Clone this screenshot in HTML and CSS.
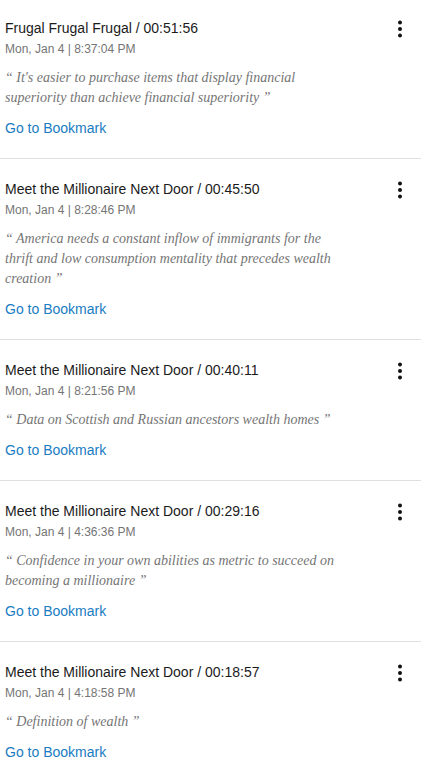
FILE: index.html
```html
<!DOCTYPE html>
<html>
<head>
<meta charset="utf-8">
<link rel="stylesheet" href="styles.css">
</head>
<body>
<ul class="list">
  <li class="item">
    <div class="head">
      <div class="meta">
        <div class="title">Frugal Frugal Frugal / 00:51:56</div>
        <div class="date">Mon, Jan 4 | 8:37:04 PM</div>
      </div>
      <button class="menu" aria-label="More"><svg viewBox="0 0 24 24" width="24" height="24"><circle cx="12" cy="5.5" r="2"/><circle cx="12" cy="12" r="2"/><circle cx="12" cy="18.5" r="2"/></svg></button>
    </div>
    <p class="quote">“ It's easier to purchase items that display financial superiority than achieve financial superiority ”</p>
    <a class="link" href="#">Go to Bookmark</a>
  </li>
  <li class="item">
    <div class="head">
      <div class="meta">
        <div class="title">Meet the Millionaire Next Door / 00:45:50</div>
        <div class="date">Mon, Jan 4 | 8:28:46 PM</div>
      </div>
      <button class="menu" aria-label="More"><svg viewBox="0 0 24 24" width="24" height="24"><circle cx="12" cy="5.5" r="2"/><circle cx="12" cy="12" r="2"/><circle cx="12" cy="18.5" r="2"/></svg></button>
    </div>
    <p class="quote">“ America needs a constant inflow of immigrants for the thrift and low consumption mentality that precedes wealth creation ”</p>
    <a class="link" href="#">Go to Bookmark</a>
  </li>
  <li class="item">
    <div class="head">
      <div class="meta">
        <div class="title">Meet the Millionaire Next Door / 00:40:11</div>
        <div class="date">Mon, Jan 4 | 8:21:56 PM</div>
      </div>
      <button class="menu" aria-label="More"><svg viewBox="0 0 24 24" width="24" height="24"><circle cx="12" cy="5.5" r="2"/><circle cx="12" cy="12" r="2"/><circle cx="12" cy="18.5" r="2"/></svg></button>
    </div>
    <p class="quote">“ Data on Scottish and Russian ancestors wealth homes ”</p>
    <a class="link" href="#">Go to Bookmark</a>
  </li>
  <li class="item">
    <div class="head">
      <div class="meta">
        <div class="title">Meet the Millionaire Next Door / 00:29:16</div>
        <div class="date">Mon, Jan 4 | 4:36:36 PM</div>
      </div>
      <button class="menu" aria-label="More"><svg viewBox="0 0 24 24" width="24" height="24"><circle cx="12" cy="5.5" r="2"/><circle cx="12" cy="12" r="2"/><circle cx="12" cy="18.5" r="2"/></svg></button>
    </div>
    <p class="quote">“ Confidence in your own abilities as metric to succeed on becoming a millionaire ”</p>
    <a class="link" href="#">Go to Bookmark</a>
  </li>
  <li class="item">
    <div class="head">
      <div class="meta">
        <div class="title">Meet the Millionaire Next Door / 00:18:57</div>
        <div class="date">Mon, Jan 4 | 4:18:58 PM</div>
      </div>
      <button class="menu" aria-label="More"><svg viewBox="0 0 24 24" width="24" height="24"><circle cx="12" cy="5.5" r="2"/><circle cx="12" cy="12" r="2"/><circle cx="12" cy="18.5" r="2"/></svg></button>
    </div>
    <p class="quote">“ Definition of wealth ”</p>
    <a class="link" href="#">Go to Bookmark</a>
  </li>
</ul>
</body>
</html>
```
FILE: styles.css
```css
html, body {
  margin: 0;
  padding: 0;
  background: #ffffff;
}
body {
  font-family: "Liberation Sans", Arial, sans-serif;
  color: #212121;
}
.list {
  list-style: none;
  margin: 0;
  padding: 0;
}
.item {
  display: flex;
  flex-direction: column;
  align-items: flex-start;
  padding: 20px 0 20px 5px;
  border-bottom: 1px solid #e0e0e0;
}
.item:first-child {
  padding-top: 18px;
}
.head {
  display: flex;
  align-self: stretch;
  justify-content: space-between;
  align-items: flex-start;
}
.meta {
  display: flex;
  flex-direction: column;
}
.title {
  font-size: 14px;
  line-height: 20px;
  color: #1b1b1b;
}
.date {
  margin-top: 1px;
  font-size: 12px;
  line-height: 20px;
  color: #757575;
}
.menu {
  border: 0;
  background: none;
  padding: 0;
  margin: -1px 9px 0 0;
  width: 24px;
  height: 24px;
  display: flex;
}
.menu svg {
  fill: #111111;
}
.quote {
  margin: 9px 0 0 0;
  max-width: 338px;
  font-family: "Liberation Serif", "Times New Roman", serif;
  font-style: italic;
  font-size: 14px;
  line-height: 20px;
  color: #757575;
}
.link {
  margin-top: 10px;
  font-size: 14px;
  line-height: 20px;
  color: #1a7cc2;
  text-decoration: none;
}
```
